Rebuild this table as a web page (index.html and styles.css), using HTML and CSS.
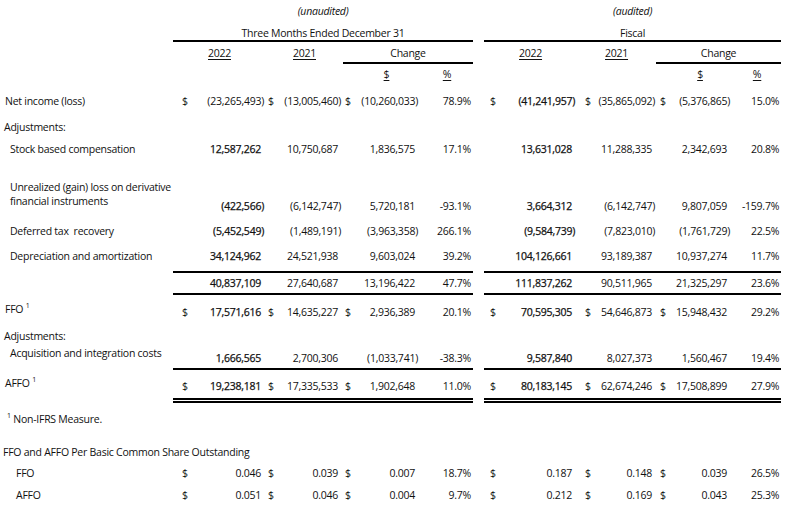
FILE: index.html
```html
<!DOCTYPE html>
<html>
<head>
<meta charset="utf-8">
<link rel="stylesheet" href="styles.css">
</head>
<body>
<table class="fin">
<colgroup>
<col class="w-label"><col class="w27"><col class="w66"><col class="w10"><col class="w67"><col class="w10"><col class="w67"><col class="w53">
<col class="w11">
<col class="w16"><col class="w77"><col class="w15"><col class="w64"><col class="w12"><col class="w64"><col class="w49">
</colgroup>
<tbody>
<tr class="r-a">
<td></td><td colspan="7" class="ctr it">(unaudited)</td><td></td><td colspan="7" class="ctr it">(audited)</td>
</tr>
<tr class="r-b">
<td class="nb"></td><td colspan="7" class="ctr rule">Three Months Ended December 31</td><td class="nb"></td><td colspan="7" class="ctr rule">Fiscal</td>
</tr>
<tr class="r-c">
<td class="nb"></td><td colspan="2" class="ctr nb"><u>2022</u></td><td colspan="2" class="ctr nb"><u>2021</u></td><td colspan="3" class="ctr rule">Change</td>
<td class="nb"></td><td colspan="2" class="ctr nb"><u>2022</u></td><td colspan="2" class="ctr nb"><u>2021</u></td><td colspan="3" class="ctr rule">Change</td>
</tr>
<tr class="r-d">
<td></td><td></td><td></td><td></td><td></td><td></td><td class="ctr"><u>$</u></td><td class="ctr pc"><u>%</u></td>
<td></td><td></td><td></td><td></td><td></td><td></td><td class="ctr"><u>$</u></td><td class="ctr pc"><u>%</u></td>
</tr>
<tr class="r-net">
<td class="lb">Net income (loss)</td>
<td class="s1">$</td><td class="v">(23,265,493<span class="cp">)</span></td><td class="s2">$</td><td class="v">(13,005,460<span class="cp">)</span></td><td class="s2">$</td><td class="v">(10,260,033<span class="cp">)</span></td><td class="p">78.9%</td>
<td></td>
<td class="s4">$</td><td class="v b">(41,241,957<span class="cp">)</span></td><td class="s5">$</td><td class="v v2">(35,865,092<span class="cp">)</span></td><td class="s6">$</td><td class="v">(5,376,865<span class="cp">)</span></td><td class="p">15.0%</td>
</tr>
<tr class="r-adj1">
<td class="lb lb-h" colspan="16">Adjustments:</td>
</tr>
<tr class="r-stock">
<td class="lb in">Stock based compensation</td>
<td></td><td class="v b">12,587,262</td><td></td><td class="v">10,750,687</td><td></td><td class="v">1,836,575</td><td class="p">17.1%</td>
<td></td>
<td></td><td class="v b">13,631,028</td><td></td><td class="v v2">11,288,335</td><td></td><td class="v">2,342,693</td><td class="p">20.8%</td>
</tr>
<tr class="r-unr">
<td class="lb in lift">Unrealized (gain) loss on derivative<br>financial instruments</td>
<td></td><td class="v b">(422,566<span class="cp">)</span></td><td></td><td class="v">(6,142,747<span class="cp">)</span></td><td></td><td class="v">5,720,181</td><td class="p">-93.1%</td>
<td></td>
<td></td><td class="v b">3,664,312</td><td></td><td class="v v2">(6,142,747<span class="cp">)</span></td><td></td><td class="v">9,807,059</td><td class="p">-159.7%</td>
</tr>
<tr class="r-def">
<td class="lb in">Deferred tax &nbsp;recovery</td>
<td></td><td class="v b">(5,452,549<span class="cp">)</span></td><td></td><td class="v">(1,489,191<span class="cp">)</span></td><td></td><td class="v">(3,963,358<span class="cp">)</span></td><td class="p">266.1%</td>
<td></td>
<td></td><td class="v b">(9,584,739<span class="cp">)</span></td><td></td><td class="v v2">(7,823,010<span class="cp">)</span></td><td></td><td class="v">(1,761,729<span class="cp">)</span></td><td class="p">22.5%</td>
</tr>
<tr class="r-dep ruled">
<td class="lb in nb">Depreciation and amortization</td>
<td class="rl"></td><td class="v b rl">34,124,962</td><td class="rl"></td><td class="v rl">24,521,938</td><td class="rl"></td><td class="v rl">9,603,024</td><td class="p rl">39.2%</td>
<td class="nb"></td>
<td class="rl"></td><td class="v b rl">104,126,661</td><td class="rl"></td><td class="v v2 rl">93,189,387</td><td class="rl"></td><td class="v rl">10,937,274</td><td class="p rl">11.7%</td>
</tr>
<tr class="r-sub ruled">
<td class="nb"></td>
<td class="rl"></td><td class="v b rl">40,837,109</td><td class="rl"></td><td class="v rl">27,640,687</td><td class="rl"></td><td class="v rl">13,196,422</td><td class="p rl">47.7%</td>
<td class="nb"></td>
<td class="rl"></td><td class="v b rl">111,837,262</td><td class="rl"></td><td class="v v2 rl">90,511,965</td><td class="rl"></td><td class="v rl">21,325,297</td><td class="p rl">23.6%</td>
</tr>
<tr class="r-ffo">
<td class="lb lift-s">FFO <sup>1</sup></td>
<td class="s1">$</td><td class="v b">17,571,616</td><td class="s2">$</td><td class="v">14,635,227</td><td class="s2">$</td><td class="v">2,936,389</td><td class="p">20.1%</td>
<td></td>
<td class="s4">$</td><td class="v b">70,595,305</td><td class="s5">$</td><td class="v v2">54,646,873</td><td class="s6">$</td><td class="v">15,948,432</td><td class="p">29.2%</td>
</tr>
<tr class="r-adj2">
<td class="lb lb-h" colspan="16">Adjustments:</td>
</tr>
<tr class="r-acq ruled">
<td class="lb in nb lift">Acquisition and integration costs</td>
<td class="rl"></td><td class="v b rl">1,666,565</td><td class="rl"></td><td class="v rl">2,700,306</td><td class="rl"></td><td class="v rl">(1,033,741<span class="cp">)</span></td><td class="p rl">-38.3%</td>
<td class="nb"></td>
<td class="rl"></td><td class="v b rl">9,587,840</td><td class="rl"></td><td class="v v2 rl">8,027,373</td><td class="rl"></td><td class="v rl">1,560,467</td><td class="p rl">19.4%</td>
</tr>
<tr class="r-affo dbl">
<td class="lb nb lift">AFFO <sup>1</sup></td>
<td class="s1 dl">$</td><td class="v b dl">19,238,181</td><td class="s2 dl">$</td><td class="v dl">17,335,533</td><td class="s2 dl">$</td><td class="v dl">1,902,648</td><td class="p dl">11.0%</td>
<td class="nb"></td>
<td class="s4 dl">$</td><td class="v b dl">80,183,145</td><td class="s5 dl">$</td><td class="v v2 dl">62,674,246</td><td class="s6 dl">$</td><td class="v dl">17,508,899</td><td class="p dl">27.9%</td>
</tr>
<tr class="r-note">
<td class="note" colspan="16"><sup>1</sup> Non-IFRS Measure.</td>
</tr>
<tr class="r-head">
<td class="head" colspan="16">FFO and AFFO Per Basic Common Share Outstanding</td>
</tr>
<tr class="r-ps1">
<td class="lb in2">FFO</td>
<td class="s1">$</td><td class="v">0.046</td><td class="s2">$</td><td class="v">0.039</td><td class="s2">$</td><td class="v">0.007</td><td class="p">18.7%</td>
<td></td>
<td class="s4">$</td><td class="v">0.187</td><td class="s5">$</td><td class="v v2">0.148</td><td class="s6">$</td><td class="v">0.039</td><td class="p">26.5%</td>
</tr>
<tr class="r-ps2">
<td class="lb in2">AFFO</td>
<td class="s1">$</td><td class="v">0.051</td><td class="s2">$</td><td class="v">0.046</td><td class="s2">$</td><td class="v">0.004</td><td class="p">9.7%</td>
<td></td>
<td class="s4">$</td><td class="v">0.212</td><td class="s5">$</td><td class="v v2">0.169</td><td class="s6">$</td><td class="v">0.043</td><td class="p">25.3%</td>
</tr>
</tbody>
</table>
</body>
</html>
```

FILE: styles.css
```css
html, body {
  margin: 0;
  padding: 0;
  background: #ffffff;
}
body {
  font-family: "Open Sans", "Noto Sans", "Liberation Sans", sans-serif;
  font-size: 10.5px;
  letter-spacing: -0.25px;
  color: #111111;
}
.fin {
  table-layout: fixed;
  width: 781px;
  border-collapse: separate;
  border-spacing: 0;
}
.w-label { width: 173px; }
.w27 { width: 27px; }
.w66 { width: 66px; }
.w10 { width: 10px; }
.w67 { width: 67px; }
.w53 { width: 53px; }
.w11 { width: 11px; }
.w16 { width: 16px; }
.w77 { width: 77px; }
.w15 { width: 15px; }
.w64 { width: 64px; }
.w12 { width: 12px; }
.w49 { width: 49px; }

.fin td {
  padding: 0 0 3px 0;
  line-height: 14px;
  vertical-align: bottom;
  white-space: nowrap;
  overflow: visible;
}
.ctr { text-align: center; }
.it { font-style: italic; }
u { text-decoration: underline; text-underline-offset: 2px; }

.r-a { height: 21px; }
.r-b { height: 21px; }
.r-b td { padding-bottom: 0; border-bottom: 2px solid transparent; }
.r-b td.rule { border-bottom-color: #000; }
.r-c { height: 22px; }
.r-c td { padding-bottom: 2px; border-bottom: 2px solid transparent; }
.r-c td.rule { border-bottom-color: #000; }
.r-d { height: 20px; }
.r-d td.pc { padding-left: 1px; }
.r-net { height: 27px; }
.r-adj1 { height: 26px; }
.r-stock { height: 22px; }
.r-unr { height: 57px; }
.r-def { height: 25px; }
.r-dep { height: 32px; }
.r-sub { height: 22px; }
.ruled td { border-bottom: 2px solid transparent; }
.ruled td.rl { border-bottom-color: #000; }
.r-dep td { padding-bottom: 8px; }
.r-sub td { padding-bottom: 3px; }
.r-ffo { height: 27px; }
.r-adj2 { height: 24px; }
.r-acq { height: 23px; }
.r-acq td { padding-bottom: 3px; }
.r-affo { height: 33px; }
.dbl td { border-bottom: 5px double transparent; padding-bottom: 5px; }
.dbl td.dl { border-bottom-color: #000; }
.r-note { height: 23px; }
.r-note td { padding-bottom: 0; }
.r-head { height: 36px; }
.r-ps1 { height: 21px; }
.r-ps2 { height: 22px; }

.lb { padding-left: 5px !important; text-align: left; }
.lb-h { padding-left: 4px !important; }
.in { padding-left: 10px !important; }
.in2 { padding-left: 16px !important; }
.fin td.lift { padding-bottom: 8px; }
.fin td.lift-s { padding-bottom: 6px; }
.r-unr td.lift { padding-bottom: 8px; }

.s1 { padding-left: 9px !important; }
.s2 { padding-left: 2px !important; }
.s4 { padding-left: 6px !important; }
.s5 { padding-left: 8px !important; }
.s6 { padding-left: 4px !important; }

.v { text-align: right; padding-right: 5px !important; }
.v2 { padding-right: 4px !important; }
.p { text-align: right; padding-right: 2px !important; }
.b { -webkit-text-stroke: 0.25px currentColor; }
.cp { margin-right: -3px; }

sup {
  font-size: 7px;
  line-height: 0;
  vertical-align: 5px;
}
.note { padding-left: 7px !important; }
.head { padding-left: 3px !important; }
```
